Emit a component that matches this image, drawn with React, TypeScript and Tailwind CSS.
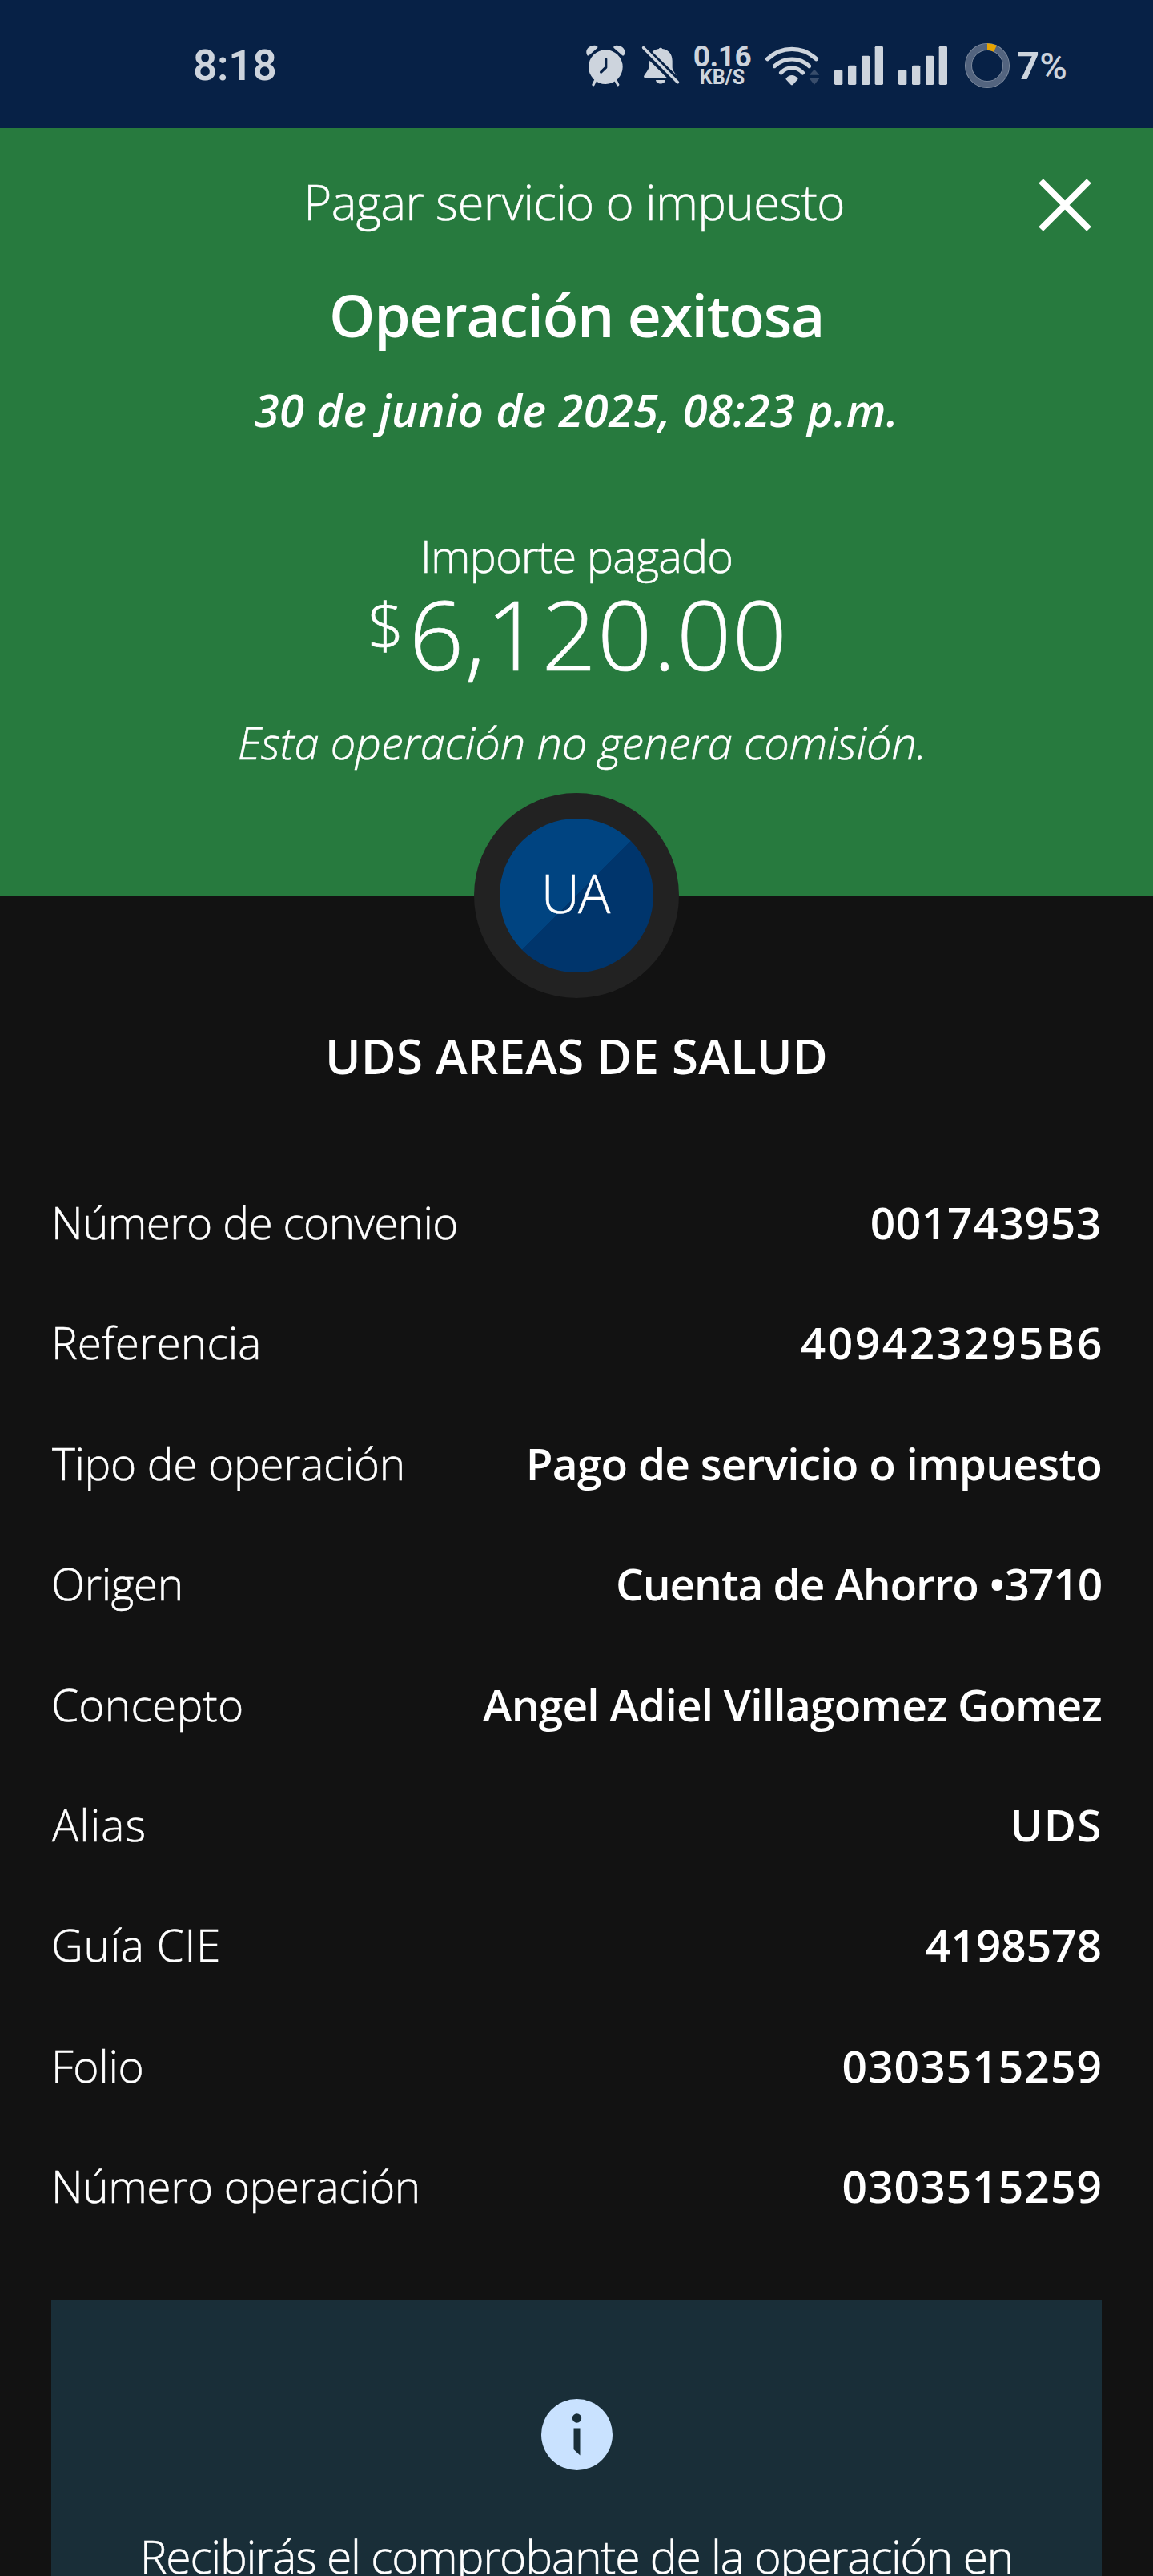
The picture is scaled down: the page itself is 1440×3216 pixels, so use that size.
type Detail = { label: string; labelClass: string; value: string; valueClass: string };

const details: Detail[] = [
  { label: "Número de convenio", labelClass: "tracking-[-0.65px]", value: "001743953", valueClass: "tracking-[0.7px]" },
  { label: "Referencia", labelClass: "tracking-[0.1px]", value: "409423295B6", valueClass: "tracking-[2.6px] -mr-[3px]" },
  { label: "Tipo de operación", labelClass: "ml-[1px] tracking-[-0.35px]", value: "Pago de servicio o impuesto", valueClass: "tracking-[-0.78px]" },
  { label: "Origen", labelClass: "tracking-[-0.4px]", value: "Cuenta de Ahorro •3710", valueClass: "tracking-[-1.1px]" },
  { label: "Concepto", labelClass: "tracking-[0.24px]", value: "Angel Adiel Villagomez Gomez", valueClass: "tracking-[-0.8px]" },
  { label: "Alias", labelClass: "ml-[1px] tracking-[1.1px]", value: "UDS", valueClass: "tracking-[1.4px] -mr-[1px]" },
  { label: "Guía CIE", labelClass: "tracking-[0.7px]", value: "4198578", valueClass: "" },
  { label: "Folio", labelClass: "tracking-[-0.3px]", value: "0303515259", valueClass: "tracking-[1.1px] -mr-[1px]" },
  { label: "Número operación", labelClass: "tracking-[-0.45px]", value: "0303515259", valueClass: "tracking-[1.1px] -mr-[1px]" },
];

function AlarmIcon() {
  return (
    <svg viewBox="60 0 159 330" className="h-[110px] w-[53px]" fill="currentColor">
      <circle cx="139" cy="161" r="64" />
      <path d="M103 207 93 227M175 207l10 20" stroke="currentColor" strokeWidth="10" strokeLinecap="round" />
      <path d="M70 117C60 99 74 80 98 80c9 0 14 6 10 10L78 116c-3 3-6 4-8 1ZM208 117c10-18-4-37-28-37-9 0-14 6-10 10l30 26c3 3 6 4 8 1Z" />
      <path d="M140 131v32l-18 17" fill="none" stroke="#072146" strokeWidth="10" strokeLinecap="round" strokeLinejoin="round" />
    </svg>
  );
}

function MutedBellIcon() {
  return (
    <svg viewBox="270 0 150 330" className="h-[110px] w-[50px]" fill="currentColor">
      <path d="M314 104c7-6 15-9 25-11v-1c2-4 10-4 12 0v1c24 3 38 20 38 45v24c0 12 9 20 16 31L314 104Z" />
      <path d="M304 137 368 201H286c-4 0-5-4-2-9 8-12 19-23 19-42 0-5 0-9 1-13ZM327 210h36c-2 18-34 18-36 0Z" />
      <path d="M281 89 409 218" fill="none" stroke="currentColor" strokeWidth="11" strokeLinecap="round" />
    </svg>
  );
}

function WifiIcon() {
  return (
    <svg viewBox="735 0 210 330" className="h-[110px] w-[70px]" fill="none">
      <g stroke="currentColor" strokeWidth="15" strokeLinecap="round">
        <path d="M746 131C798 82 877 82 928 131" strokeWidth="16" />
        <path d="M772 158C809 123 866 123 902 158" />
        <path d="M796 183C819 158 855 158 878 183" />
      </g>
      <path d="M815 204c12-16 32-16 44 0 1 2 1 3 0 4l-18 19c-2 2-6 2-8 0l-18-19c-1-1-1-2 0-4Z" fill="currentColor" />
      <path d="m902 191 19-21 19 21ZM902 204l19 23 19-23Z" fill="#394d6b" />
    </svg>
  );
}

function SignalIcon() {
  return (
    <svg viewBox="63 0 189 330" className="h-[110px] w-[63px]" fill="currentColor">
      <rect x="66" y="171" width="31" height="57" rx="5" />
      <rect x="117" y="155" width="31" height="73" rx="5" />
      <rect x="168" y="119" width="31" height="109" rx="5" />
      <rect x="218" y="83" width="31" height="145" rx="5" />
    </svg>
  );
}

function BatteryRing() {
  return (
    <svg viewBox="552 0 174 330" className="h-[110px] w-[58px]" fill="none">
      <circle cx="639" cy="156" r="70.5" stroke="#8390a3" strokeWidth="27" />
      <circle cx="639" cy="156" r="70.5" stroke="#53647f" strokeWidth="22" />
      <path d="M639 85.5A70.5 70.5 0 0 1 669 92.2" stroke="#e8a400" strokeWidth="26" />
    </svg>
  );
}

function StatusBar() {
  return (
    <header className="flex h-40 shrink-0 items-start bg-[#072146] pt-[30px] pl-[241px] font-['Roboto',sans-serif] text-[#cdd4dd]">
      <div className="mt-[2px] h-[104px] w-[489px] text-[53px] leading-[100px] font-semibold tracking-[-0.2px]">8:18</div>
      <AlarmIcon />
      <div className="w-[17px]" />
      <MutedBellIcon />
      <div className="ml-[17px] flex w-[70px] flex-col items-center pt-[26px] font-bold">
        <span className="text-[37px] leading-[30px] tracking-[-0.5px]">0.16</span>
        <span className="text-[25px] leading-[21px]">KB/S</span>
      </div>
      <div className="w-[18px]" />
      <WifiIcon />
      <div className="w-4" />
      <SignalIcon />
      <div className="w-[17px]" />
      <SignalIcon />
      <div className="w-5" />
      <BatteryRing />
      <div className="ml-2 flex items-baseline font-bold">
        <span className="text-[49px] leading-[105px]">7</span>
        <span className="text-[47px] leading-[105px] font-medium">%</span>
      </div>
    </header>
  );
}

function CloseIcon() {
  return (
    <svg viewBox="0 0 66 66" className="h-[66px] w-[66px]" stroke="currentColor" strokeWidth="8">
      <path d="M3 3 63 63M63 3 3 63" />
    </svg>
  );
}

function Summary() {
  return (
    <section className="flex h-[958px] shrink-0 flex-col items-center bg-[#277a3e] pt-[60px] font-light">
      <div className="grid h-16 w-full grid-rows-[64px] items-start">
        <h1 className="col-start-1 row-start-1 justify-self-center pr-[6px] text-[60px] leading-16 tracking-[-0.64px] [-webkit-text-stroke:0.5px_white]">
          Pagar servicio o impuesto
        </h1>
        <button aria-label="Cerrar" className="col-start-1 row-start-1 mt-[3px] mr-[77px] justify-self-end">
          <CloseIcon />
        </button>
      </div>
      <h2 className="mt-[69px] text-[73px] leading-20 font-semibold tracking-[-1.24px]">Operación exitosa</h2>
      <p className="mt-[46px] text-[56px] leading-16 font-semibold tracking-[0.4px] italic">
        30 de junio de 2025, 08:23 p.m.
      </p>
      <p className="mt-[118px] text-[56px] leading-16 tracking-[-0.94px] [-webkit-text-stroke:0.5px_white]">Importe pagado</p>
      <div className="mt-[16px] flex h-[100px] items-start pl-[3px] leading-[100px] [-webkit-text-stroke:0.7px_white]">
        <span className="-mt-3 text-[80px]">$</span>
        <span className="ml-[6px] text-[120px] tracking-[1px]">6,120.00</span>
      </div>
      <p className="mt-[53px] pl-[14px] text-[56px] leading-16 tracking-[-0.16px] italic [-webkit-text-stroke:0.5px_white]">
        Esta operación no genera comisión.
      </p>
    </section>
  );
}

function Avatar() {
  return (
    <div className="z-10 -mt-32 flex size-64 shrink-0 items-center justify-center rounded-full bg-[#222222]">
      <div className="flex size-48 items-center justify-center rounded-full bg-[linear-gradient(135deg,#004481_50%,#00356c_50%)] pr-1 pb-[7px] text-[67px] leading-none font-light tracking-[-2px] [-webkit-text-stroke:0.5px_white]">
        UA
      </div>
    </div>
  );
}

function InfoIcon() {
  return (
    <svg viewBox="0 0 89 89" className="h-[89px] w-[89px] shrink-0">
      <circle cx="44.5" cy="44.5" r="44.5" fill="#c9e2ff" />
      <circle cx="44.5" cy="24" r="5.7" fill="#192e38" />
      <path d="M40.5 36.5h8v34l-8-7.5Z" fill="#192e38" />
    </svg>
  );
}

export default function App() {
  return (
    <div className="flex h-[3216px] w-[1440px] flex-col overflow-hidden bg-[#121212] font-['Open_Sans',sans-serif] text-white">
      <StatusBar />
      <Summary />
      <main className="flex shrink-0 flex-col items-center px-16">
        <Avatar />
        <h3 className="mt-10 text-[60px] leading-16 font-semibold tracking-[0.25px]">UDS AREAS DE SALUD</h3>
        <dl className="mt-[101px] w-full text-[55px]">
          {details.map((d) => (
            <div key={d.label} className="flex h-[150.4px] items-center justify-between whitespace-nowrap">
              <dt className="font-light [-webkit-text-stroke:0.5px_white]">
                <span className={`inline-block ${d.labelClass}`}>{d.label}</span>
              </dt>
              <dd className={`font-semibold ${d.valueClass}`}>{d.value}</dd>
            </div>
          ))}
        </dl>
        <aside className="mt-[67px] flex h-[344px] w-full flex-col items-center bg-[#192e38] pt-[123px]">
          <InfoIcon />
          <p className="mt-[75px] h-14 text-[57px] leading-16 font-light tracking-[-1.24px] whitespace-nowrap [-webkit-text-stroke:0.5px_white]">
            Recibirás el comprobante de la operación en
          </p>
        </aside>
      </main>
    </div>
  );
}
